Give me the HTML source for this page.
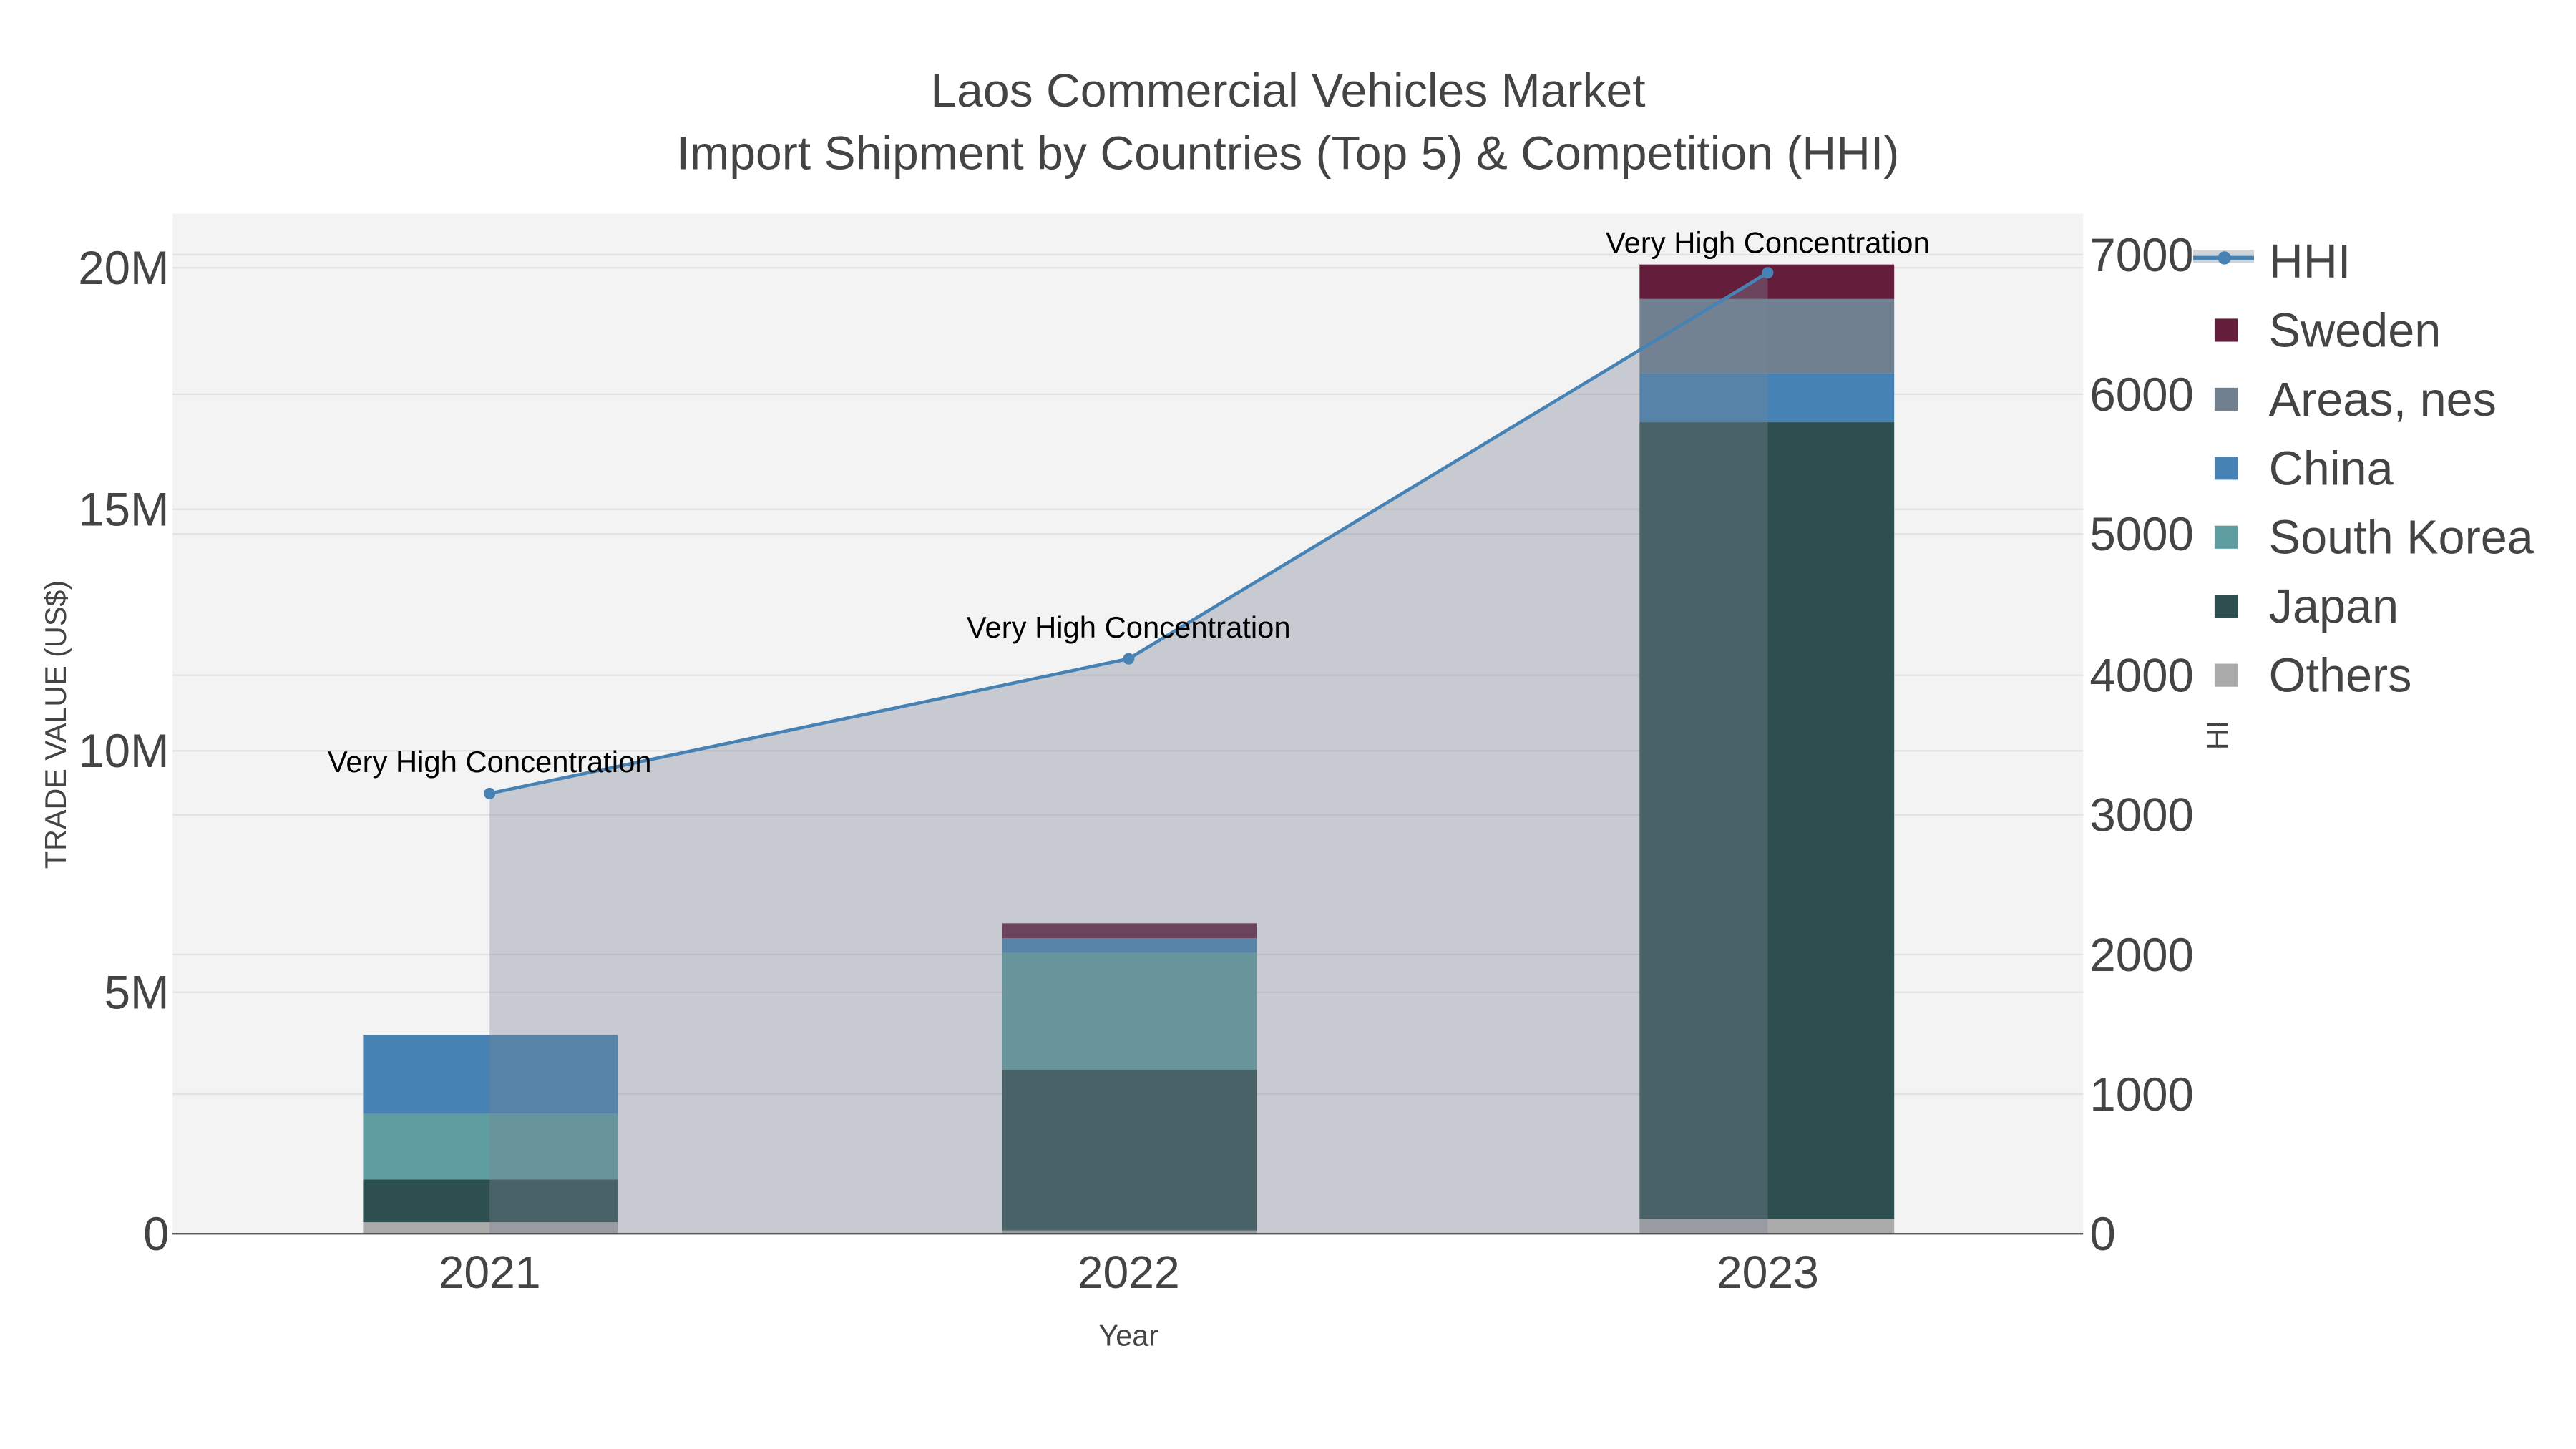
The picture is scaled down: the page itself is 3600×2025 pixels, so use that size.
<!DOCTYPE html>
<html><head><meta charset="utf-8"><style>
html,body{margin:0;padding:0;background:#fff;}
svg{display:block;font-family:"Liberation Sans",sans-serif;}
</style></head><body>
<svg width="3600" height="2025" viewBox="0 0 1568 882" xmlns="http://www.w3.org/2000/svg">
<rect width="1568" height="882" fill="#fff"/>
<rect x="105" y="130" width="1163" height="621" fill="#f3f3f3"/>
<g stroke="#e2e2e2" stroke-width="1">
<line x1="105" x2="1268" y1="604" y2="604"/><line x1="105" x2="1268" y1="457" y2="457"/>
<line x1="105" x2="1268" y1="310" y2="310"/><line x1="105" x2="1268" y1="163" y2="163"/>
<line x1="105" x2="1268" y1="666" y2="666"/><line x1="105" x2="1268" y1="581" y2="581"/>
<line x1="105" x2="1268" y1="496" y2="496"/><line x1="105" x2="1268" y1="411" y2="411"/>
<line x1="105" x2="1268" y1="325" y2="325"/><line x1="105" x2="1268" y1="240" y2="240"/>
<line x1="105" x2="1268" y1="155" y2="155"/>
</g>
<rect x="221" y="744" width="155" height="7" fill="#aaaaaa"/>
<rect x="221" y="718" width="155" height="26" fill="#2e4f4f"/>
<rect x="221" y="678" width="155" height="40" fill="#5f9ea0"/>
<rect x="221" y="630" width="155" height="48" fill="#4682b4"/>
<rect x="610" y="749" width="155" height="2" fill="#aaaaaa"/>
<rect x="610" y="651" width="155" height="98" fill="#2e4f4f"/>
<rect x="610" y="580" width="155" height="71" fill="#5f9ea0"/>
<rect x="610" y="571" width="155" height="9" fill="#4682b4"/>
<rect x="610" y="562" width="155" height="9" fill="#641e3c"/>
<rect x="998" y="742" width="155" height="9" fill="#aaaaaa"/>
<rect x="998" y="257" width="155" height="485" fill="#2e4f4f"/>
<rect x="998" y="227" width="155" height="30" fill="#4682b4"/>
<rect x="998" y="182" width="155" height="45" fill="#708090"/>
<rect x="998" y="161" width="155" height="21" fill="#641e3c"/>
<polygon points="298,483 687,401 1076,166 1076,751 298,751" fill="rgb(122,132,150)" fill-opacity="0.36"/>
<line x1="105" x2="1268" y1="751" y2="751" stroke="#444" stroke-width="1"/>
<polyline points="298,483 687,401 1076,166" fill="none" stroke="#4682b4" stroke-width="2"/>
<g fill="#4682b4"><circle cx="298" cy="483" r="3.5"/><circle cx="687" cy="401" r="3.5"/><circle cx="1076" cy="166" r="3.5"/></g>
<g font-size="18.2" fill="#000" text-anchor="middle">
<text x="298" y="470">Very High Concentration</text>
<text x="687" y="388">Very High Concentration</text>
<text x="1076" y="154">Very High Concentration</text>
</g>
<g font-size="28.8" fill="#444" text-anchor="middle">
<text x="784" y="65">Laos Commercial Vehicles Market</text>
<text x="784" y="103">Import Shipment by Countries (Top 5) &amp; Competition (HHI)</text>
</g>
<g font-size="28" fill="#444" text-anchor="middle">
<text x="298" y="784">2021</text><text x="687" y="784">2022</text><text x="1076" y="784">2023</text>
</g>
<g font-size="28.5" fill="#444" text-anchor="end">
<text x="103" y="761">0</text><text x="103" y="614">5M</text><text x="103" y="467">10M</text>
<text x="103" y="320">15M</text><text x="103" y="173">20M</text>
</g>
<g font-size="28.5" fill="#444">
<text x="1272" y="761">0</text><text x="1272" y="676">1000</text><text x="1272" y="591">2000</text>
<text x="1272" y="506">3000</text><text x="1272" y="421">4000</text><text x="1272" y="335">5000</text>
<text x="1272" y="250">6000</text><text x="1272" y="165">7000</text>
</g>
<text x="687" y="819" font-size="18" fill="#444" text-anchor="middle">Year</text>
<text transform="translate(40,441) rotate(-90)" font-size="18" fill="#444" text-anchor="middle">TRADE VALUE (US$)</text>
<text transform="translate(1356,441) rotate(-90)" font-size="18" fill="#444" text-anchor="middle">HHI</text>
<rect x="1334" y="142" width="234" height="48" fill="#fff"/>
<rect x="1340" y="190" width="228" height="250" fill="#fff"/>
<rect x="1335" y="152" width="37" height="8" fill="#cfd4db"/>
<line x1="1335" x2="1372" y1="157" y2="157" stroke="#4682b4" stroke-width="2.5"/>
<circle cx="1354" cy="157" r="4" fill="#4682b4"/>
<rect x="1348" y="194" width="14" height="14" fill="#641e3c"/>
<rect x="1348" y="236" width="14" height="14" fill="#708090"/>
<rect x="1348" y="278" width="14" height="14" fill="#4682b4"/>
<rect x="1348" y="320" width="14" height="14" fill="#5f9ea0"/>
<rect x="1348" y="362" width="14" height="14" fill="#2e4f4f"/>
<rect x="1348" y="404" width="14" height="14" fill="#aaaaaa"/>
<g font-size="29" fill="#444">
<text x="1381" y="169">HHI</text><text x="1381" y="211">Sweden</text><text x="1381" y="253">Areas, nes</text>
<text x="1381" y="295">China</text><text x="1381" y="337">South Korea</text><text x="1381" y="379">Japan</text>
<text x="1381" y="421">Others</text>
</g>
</svg>
</body></html>
